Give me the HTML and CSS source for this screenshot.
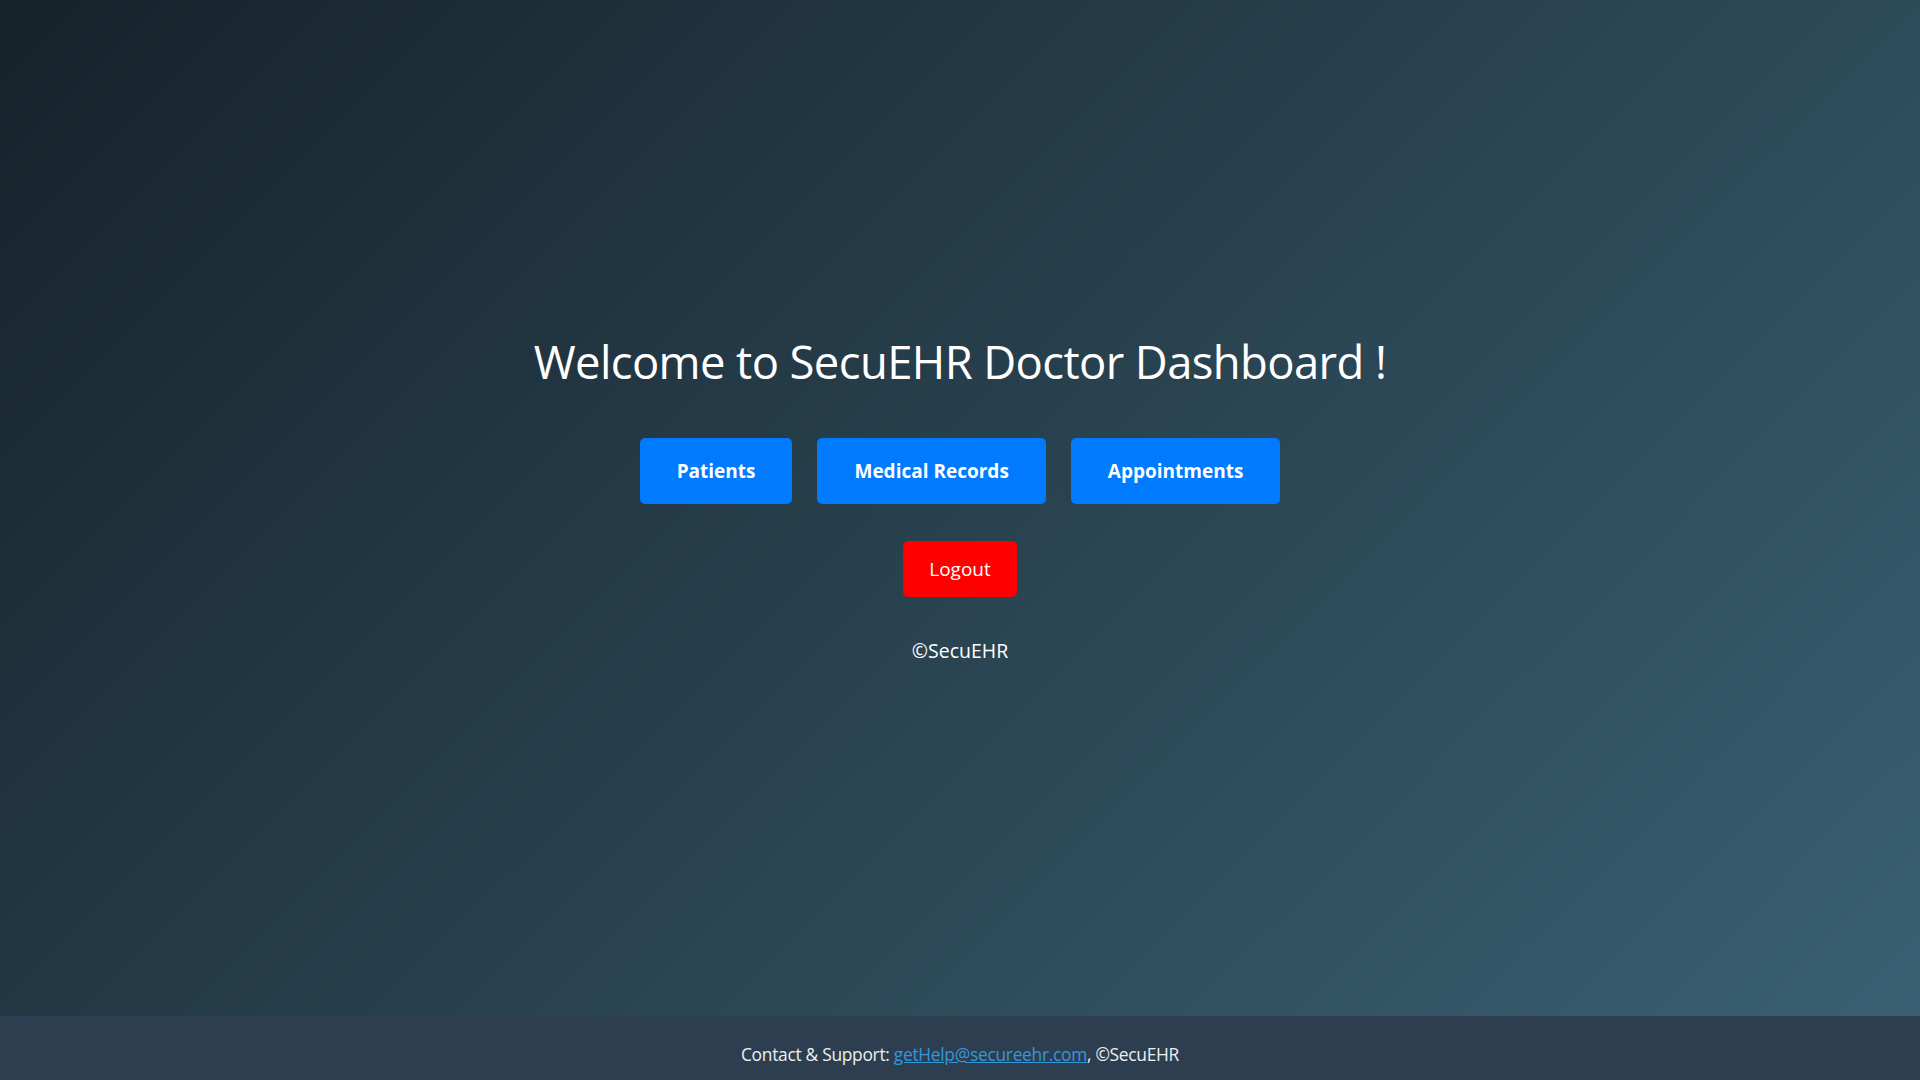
FILE: index.html
```html
<!DOCTYPE html>
<html lang="en">
<head>
<meta charset="UTF-8">
<title>SecuEHR Doctor Dashboard</title>
<link rel="stylesheet" href="styles.css">
</head>
<body>
<main class="main">
  <div class="content">
    <h1 class="title">Welcome to SecuEHR Doctor Dashboard !</h1>
    <div class="nav">
      <a class="btn btn-primary" href="#">Patients</a>
      <a class="btn btn-primary" href="#">Medical Records</a>
      <a class="btn btn-primary" href="#">Appointments</a>
    </div>
    <div class="logout-row">
      <a class="btn btn-danger" href="#">Logout</a>
    </div>
    <p class="copy">©SecuEHR</p>
  </div>
</main>
<footer class="footer">
  <p>Contact &amp; Support: <a class="link" href="#">getHelp@secureehr.com</a>, ©SecuEHR</p>
</footer>
</body>
</html>
```
FILE: styles.css
```css
* { box-sizing: border-box; }
html, body { height: 100%; }
body {
  margin: 0;
  display: flex;
  flex-direction: column;
  font-family: "Open Sans", "Noto Sans", sans-serif;
  color: #ffffff;
  background: #2c3e50;
}
.main {
  flex: 1;
  display: flex;
  align-items: center;
  justify-content: center;
  background: linear-gradient(135deg, #16222a 0%, #3a6073 100%);
}
.content {
  text-align: center;
  padding-bottom: 22px;
}
.title {
  margin: 0 0 47px;
  font-size: 45.4px;
  font-weight: 500;
  letter-spacing: -0.6px;
  line-height: 60px;
}
.nav {
  display: flex;
  justify-content: center;
  gap: 25px;
}
.btn {
  display: inline-block;
  color: #ffffff;
  text-decoration: none;
  border-radius: 5px;
}
.btn-primary {
  background: #007bff;
  font-weight: 700;
  font-size: 19px;
  line-height: 26px;
  padding: 20px 37px;
}
.btn-danger {
  background: #ff0000;
  font-size: 19px;
  line-height: 26px;
  padding: 15px 26px;
}
.logout-row {
  margin-top: 37px;
}
.copy {
  margin: 42px 0 0;
  font-size: 19.5px;
  line-height: 24px;
}
.footer {
  height: 64px;
  flex: 0 0 64px;
  display: flex;
  align-items: center;
  justify-content: center;
  background: #2c3e50;
  font-size: 17.4px;
  color: #ecf0f1;
}
.footer p { margin: 0; padding-top: 12px; letter-spacing: -0.3px; }
.link { color: #3498db; }
```
